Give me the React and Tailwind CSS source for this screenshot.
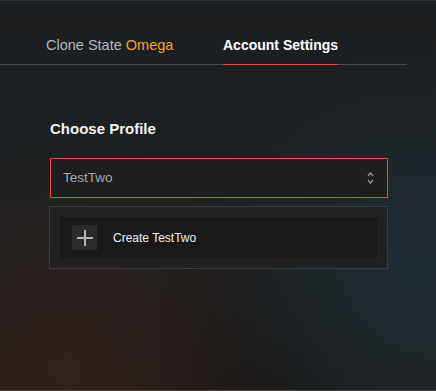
import React from "react";

const ChevronUpDown = () => (
  <svg width="7" height="14" viewBox="0 0 7 14" fill="none" stroke="#9a9ea3" strokeWidth="1.2">
    <path d="M1 5 L3.5 2 L6 5" />
    <path d="M1 9 L3.5 12 L6 9" />
  </svg>
);

const App = () => {
  return (
    <div
      className="relative w-[436px] h-[391px] overflow-hidden border-t border-b border-t-[#2b3236] border-b-[#4a3d36] bg-[#1c1e1f] bg-[radial-gradient(circle_at_95%_70%,rgba(32,46,54,0.9)_0%,rgba(32,46,54,0)_45%),radial-gradient(circle_at_15%_95%,rgba(52,34,28,0.8)_0%,rgba(52,34,28,0)_45%),radial-gradient(circle_at_60%_100%,rgba(22,20,19,0.9)_0%,rgba(22,20,19,0)_40%),linear-gradient(180deg,#1c1e20_0%,#1d2022_50%,#211f1d_100%)]"
      style={{ fontFamily: '"Liberation Sans", Arial, sans-serif' }}
    >
      <nav className="flex items-end h-[64px] w-[407px] border-b border-[#4a4c4f] pl-[46px]">
        <div className="w-[177px] pb-[9px] text-[14.5px] leading-5 text-[#b4b9be]">
          Clone State <span className="text-[#f0a526]">Omega</span>
        </div>
        <div className="pb-[9px] -mb-px border-b border-[#e24b4b] text-[14px] leading-5 font-bold text-white">
          Account Settings
        </div>
      </nav>

      <section className="pl-[50px] w-[388px]">
        <h3 className="mt-[54px] text-[15px] leading-5 font-bold text-[#f2f2f2]">Choose Profile</h3>

        <div className="mt-[19px] h-[40px] flex items-center justify-between border border-[#e84a4a] bg-[#1e1e1e] pl-[12px] pr-[13px]">
          <span className="text-[13.5px] text-[#a3a8ad]">TestTwo</span>
          <ChevronUpDown />
        </div>

        <div className="mt-[8px] border border-[#3a3d42] bg-[#212121] p-[10px] -ml-px w-[339px]">
          <div className="h-[41px] flex items-center bg-[#191919] pl-[12px]">
            <div className="w-[25px] h-[25px] bg-[#2a2a2a] flex items-center justify-center">
              <svg width="16" height="16" viewBox="0 0 16 16" stroke="#b5b5b5" strokeWidth="2">
                <path d="M0 8 H16" />
                <path d="M8 0 V16" />
              </svg>
            </div>
            <span className="ml-[16px] text-[12px] text-[#f0f0f0]">Create TestTwo</span>
          </div>
        </div>
      </section>
    </div>
  );
};

export default App;
